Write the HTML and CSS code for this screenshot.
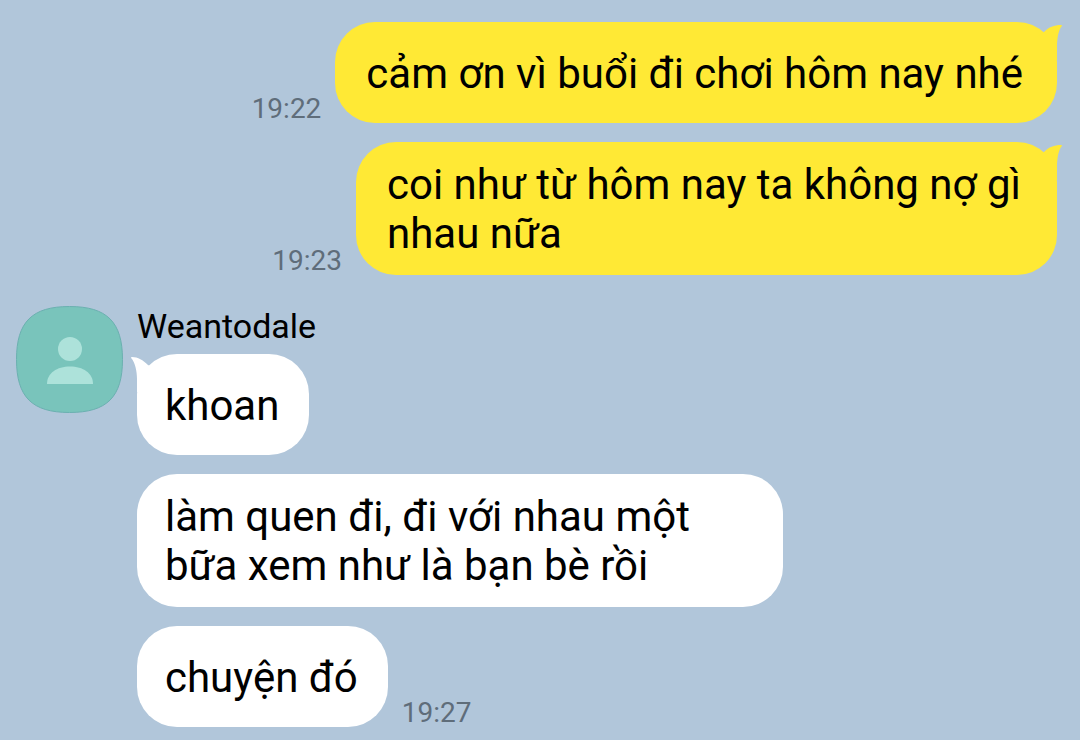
FILE: index.html
```html
<!DOCTYPE html>
<html lang="vi">
<head>
<meta charset="utf-8">
<meta name="viewport" content="width=device-width, initial-scale=1">
<title>Weantodale</title>
<link rel="stylesheet" href="styles.css">
</head>
<body>
<main class="chat">
  <section class="outgoing">
    <div class="row">
      <time class="time">19:22</time>
      <div class="bubble bubble-out">
        <svg class="tail tail-out" viewBox="0 0 28 35" aria-hidden="true"><path d="M0 14 L10 7 C15 2 20 0 27 0 Q29 0 27 2 C24 7 23 15 23 22 V35 H0Z"/></svg>
        <p class="text">cảm ơn vì buổi đi chơi hôm nay nhé</p>
      </div>
    </div>
    <div class="row">
      <time class="time">19:23</time>
      <div class="bubble bubble-out bubble-wrapped">
        <svg class="tail tail-out" viewBox="0 0 28 35" aria-hidden="true"><path d="M0 14 L10 7 C15 2 20 0 27 0 Q29 0 27 2 C24 7 23 15 23 22 V35 H0Z"/></svg>
        <p class="text">coi như từ hôm nay ta không nợ gì nhau nữa</p>
      </div>
    </div>
  </section>

  <section class="incoming">
    <svg class="avatar" viewBox="0 0 107 107" role="img" aria-label="Weantodale">
      <path class="avatar-shape" d="M53.500 .5C91 .5 106.500 16 106.500 53.500S91 106.500 53.500 106.500 .5 91 .5 53.500 16 .5 53.500 .5Z"/>
      <circle class="person" cx="54" cy="43" r="12"/>
      <path class="person" d="M31 78C31 67 41 60.500 54 60.500S77 67 77 78Z"/>
    </svg>
    <div class="thread">
      <h2 class="name">Weantodale</h2>
      <div class="row">
        <div class="bubble bubble-in">
          <svg class="tail tail-in" viewBox="0 0 28 35" aria-hidden="true"><path d="M28 14 L17 8 C12 3 7 0 1 0 Q-1 0 1 2 C4 6 6 14 6 22 V35 H28Z"/></svg>
          <p class="text">khoan</p>
        </div>
      </div>
      <div class="row">
        <div class="bubble bubble-in"><p class="text">làm quen đi, đi với nhau một bữa xem như là bạn bè rồi</p></div>
      </div>
      <div class="row">
        <div class="bubble bubble-in"><p class="text">chuyện đó</p></div>
        <time class="time">19:27</time>
      </div>
    </div>
  </section>
</main>
</body>
</html>
```
FILE: styles.css
```css
* {
  box-sizing: border-box;
}

body {
  margin: 0;
  min-height: 100vh;
  background: #b1c6da;
  color: #000;
  font-family: Roboto, "Noto Sans", sans-serif;
}

.chat {
  display: flex;
  flex-direction: column;
  gap: 31px;
  padding: 22px 23px 13px 16px;
}

.outgoing,
.thread {
  display: flex;
  flex-direction: column;
  gap: 19px;
}

.row {
  display: flex;
  align-items: flex-end;
  gap: 14px;
}

.outgoing .row {
  justify-content: flex-end;
}

.bubble {
  position: relative;
  display: flex;
  align-items: center;
  min-height: 101px;
  border-radius: 40px;
}

.bubble-out {
  max-width: 730px;
  padding: 18px 34px 17px 31px;
  background: #ffe935;
}

.bubble-wrapped {
  max-width: 701px;
}

.bubble-in {
  max-width: 646px;
  padding: 18px 30px 17px 28px;
  background: #fff;
}

.text {
  margin: 0;
  font-size: 42px;
  line-height: 49px;
}

.tail {
  position: absolute;
  top: 3px;
  width: 28px;
  height: 35px;
}

.tail-out {
  right: -5px;
  fill: #ffe935;
}

.tail-in {
  left: -6px;
  fill: #fff;
}

.time {
  flex: none;
  font-size: 28px;
  line-height: 28px;
  color: #5f6d7a;
}

.incoming {
  display: flex;
  align-items: flex-start;
  gap: 14px;
}

.avatar {
  flex: none;
  width: 107px;
  height: 107px;
}

.avatar-shape {
  fill: #79c4bb;
  stroke: #6bb0b0;
}

.person {
  fill: #ade2da;
}

.thread {
  flex: 1;
  min-width: 0;
}

.name {
  margin: 0 0 -11px;
  font-size: 34px;
  font-weight: 400;
  line-height: 40px;
}
```
